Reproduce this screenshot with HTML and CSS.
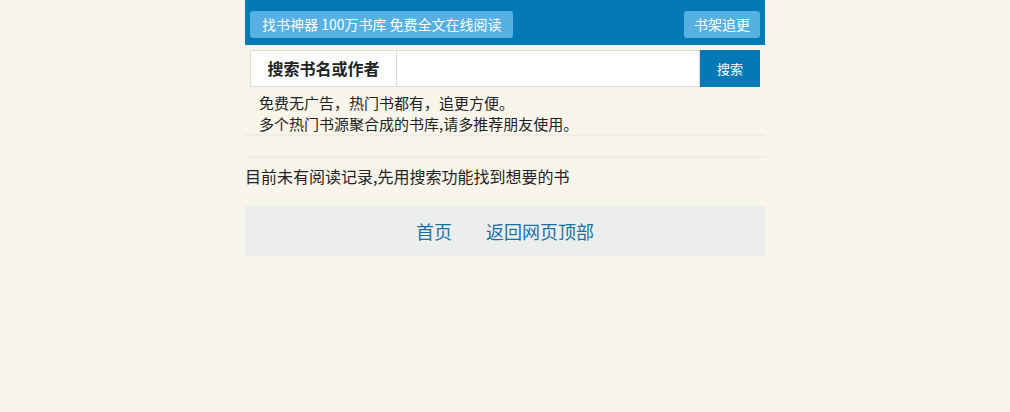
FILE: index.html
```html
<!DOCTYPE html>
<html lang="zh-CN">
<head>
    <meta charset="UTF-8">
    <meta name="viewport" content="width=device-width, initial-scale=1.0">
    <title>找书神器</title>
    <link rel="stylesheet" href="styles.css">
</head>
<body>
    <div class="wrap">
        <div class="header">
            <a class="header-btn header-btn-wide" href="#">找书神器 100万书库 免费全文在线阅读</a>
            <a class="header-btn" href="#">书架追更</a>
        </div>

        <form class="search" onsubmit="return false">
            <div class="search-label">搜索书名或作者</div>
            <input class="search-input" type="text">
            <button class="search-btn">搜索</button>
        </form>

        <div class="intro">
            免费无广告，热门书都有，追更方便。<br>
            多个热门书源聚合成的书库,请多推荐朋友使用。
        </div>
        <div class="spacer"></div>

        <div class="record">目前未有阅读记录,先用搜索功能找到想要的书</div>

        <div class="footer">
            <a href="#">首页</a>
            <a href="#">返回网页顶部</a>
        </div>
    </div>
</body>
</html>
```

FILE: styles.css
```css
body {
    margin: 0;
    background-color: #f8f5eb;
    font-family: "Noto Sans CJK SC", "Liberation Sans", sans-serif;
    color: #222;
}

.wrap {
    width: 520px;
    margin: 0 auto;
}

.header {
    display: flex;
    justify-content: space-between;
    align-items: center;
    height: 45px;
    padding: 0 5px;
    background-color: #0479b6;
    box-sizing: border-box;
}

.header-btn {
    display: block;
    height: 27px;
    line-height: 27px;
    margin-top: 3px;
    padding: 0 10px;
    border-radius: 3px;
    background-color: #57b0e2;
    color: #fff;
    font-size: 14px;
    text-decoration: none;
}

.header-btn-wide {
    padding: 0 11px 0 12px;
}

.search {
    display: flex;
    height: 37px;
    margin: 5px 5px 0;
}

.search-label {
    width: 147px;
    box-sizing: border-box;
    border: 1px solid #dcdcdc;
    background-color: #fff;
    font-size: 16px;
    font-weight: bold;
    line-height: 35px;
    text-align: center;
}

.search-input {
    flex: 1;
    margin: 0;
    border: 1px solid #dcdcdc;
    border-left: none;
    background-color: #fff;
    outline: none;
}

.search-btn {
    width: 60px;
    margin: 0;
    border: none;
    background-color: #0479b6;
    color: #fff;
    font-family: inherit;
    font-size: 13px;
    cursor: pointer;
}

.intro {
    padding: 5px 14px 0;
    height: 42px;
    font-size: 15px;
    line-height: 21px;
    border-bottom: 2px solid #efede4;
}

.spacer {
    height: 20px;
    border-bottom: 2px solid #efede4;
}

.record {
    padding: 6px 0 0;
    font-size: 16px;
    line-height: 24px;
}

.footer {
    display: flex;
    justify-content: center;
    gap: 34px;
    height: 50px;
    margin-top: 18px;
    background-color: #ebeeed;
    align-items: center;
}

.footer a {
    color: #1c6fa3;
    font-size: 18px;
    text-decoration: none;
}
```
